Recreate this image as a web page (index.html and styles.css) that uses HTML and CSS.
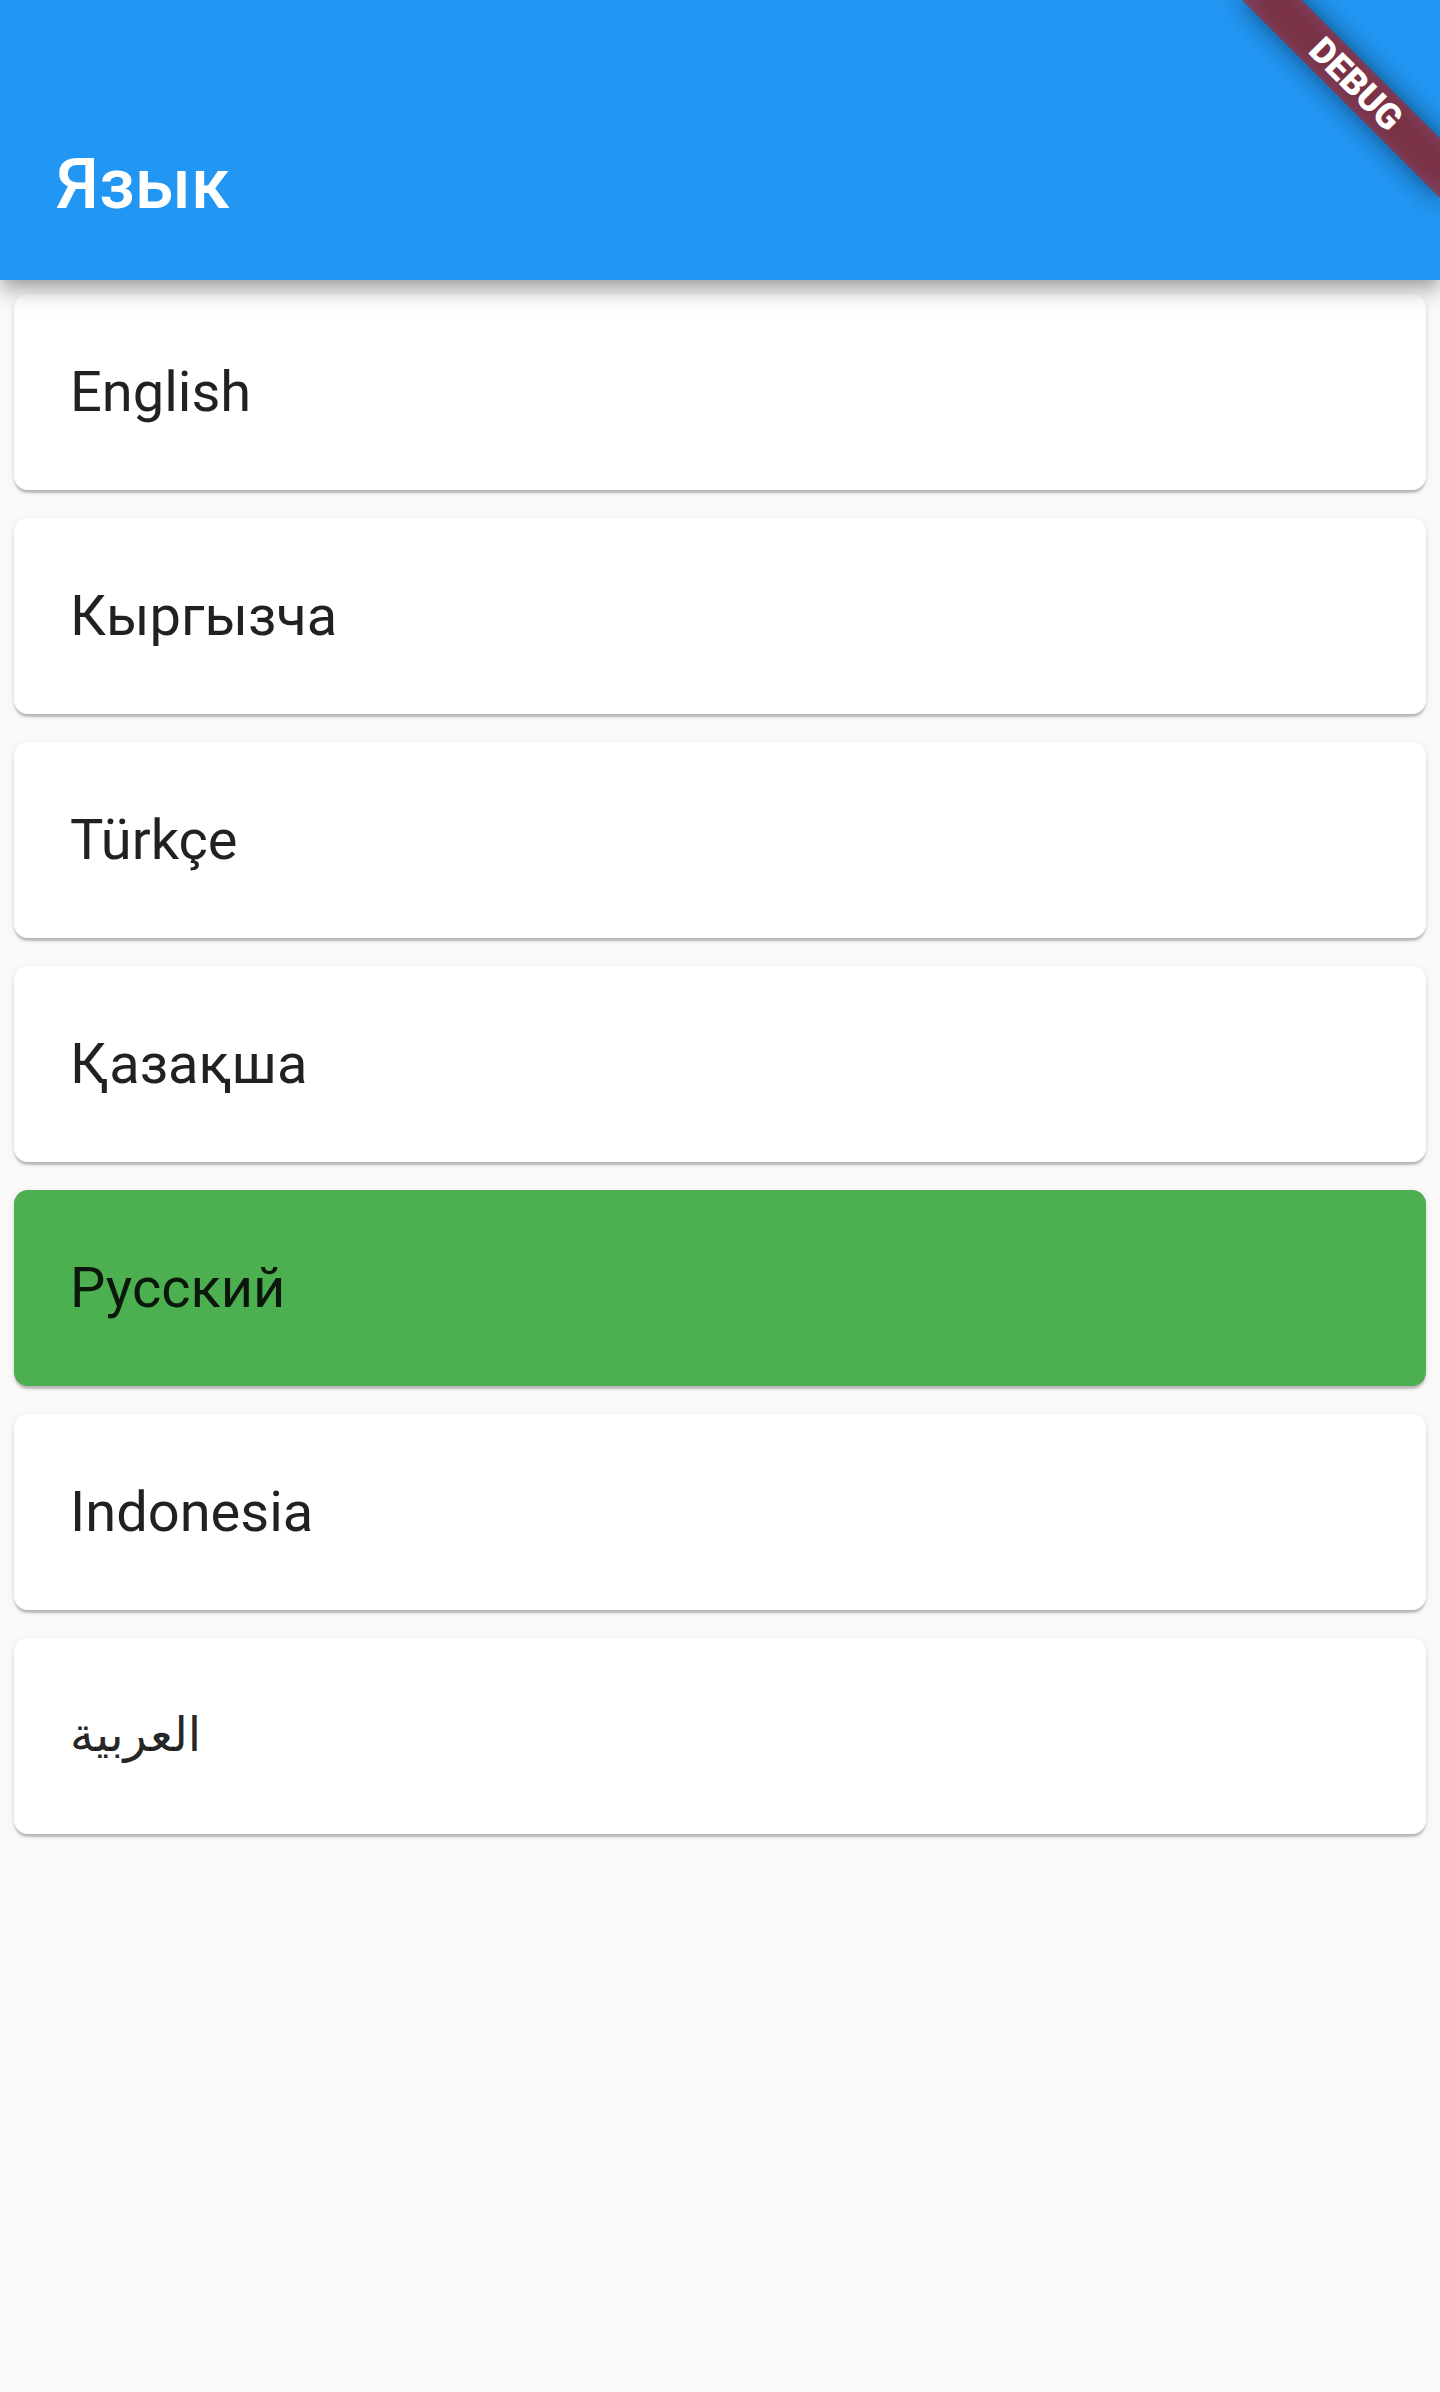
FILE: index.html
```html
<!DOCTYPE html>
<html lang="ru">
<head>
<meta charset="utf-8">
<title>Язык</title>
<link rel="stylesheet" href="styles.css">
</head>
<body>
<div class="screen">
  <header class="appbar">
    <div class="toolbar"><h1 class="title">Язык</h1></div>
  </header>
  <main class="list">
    <div class="card"><span class="label">English</span></div>
    <div class="card"><span class="label">Кыргызча</span></div>
    <div class="card"><span class="label">Türkçe</span></div>
    <div class="card"><span class="label">Қазақша</span></div>
    <div class="card card-selected"><span class="label">Русский</span></div>
    <div class="card"><span class="label">Indonesia</span></div>
    <div class="card"><span class="label label-ar">العربية</span></div>
  </main>
  <div class="banner-clip">
    <div class="banner-shadow"></div>
    <div class="banner"><span class="banner-text">DEBUG</span></div>
  </div>
</div>
</body>
</html>
```
FILE: styles.css
```css
html, body {
  margin: 0;
  padding: 0;
}
body {
  background: #fafafa;
  font-family: Roboto, "Noto Sans", "DejaVu Sans", sans-serif;
  width: 1440px;
  height: 2392px;
  overflow: hidden;
}
.screen {
  position: relative;
  width: 1440px;
  height: 2392px;
  background: #fafafa;
}
.appbar {
  position: relative;
  z-index: 2;
  height: 280px;
  background: #2196f3;
  box-sizing: border-box;
  padding-top: 84px;
  box-shadow: 0 7px 14px -3.5px rgba(0,0,0,0.2), 0 14px 17.5px 0 rgba(0,0,0,0.14), 0 3.5px 35px 0 rgba(0,0,0,0.12);
}
.toolbar {
  height: 196px;
  display: flex;
  align-items: center;
  padding-left: 56px;
  padding-top: 4px;
  box-sizing: border-box;
}
.title {
  margin: 0;
  color: #ffffff;
  font-family: Roboto, "Noto Sans", sans-serif;
  font-size: 70px;
  font-weight: 500;
  line-height: 82px;
}
.list {
  position: relative;
  z-index: 1;
  display: flex;
  flex-direction: column;
  padding: 14px 0;
}
.card {
  margin: 14px 14px;
  height: 196px;
  background: #ffffff;
  border-radius: 14px;
  display: flex;
  align-items: center;
  padding: 0 56px;
  box-shadow: 0 3.5px 2px -1px rgba(0,0,0,0.16), 0 2px 3px 0 rgba(0,0,0,0.1), 0 2px 9px 0 rgba(0,0,0,0.08);
}
.card:first-child { margin-top: 0; }
.card-selected {
  background: #4caf50;
}
.label {
  color: rgba(0,0,0,0.87);
  font-size: 56px;
  font-weight: 400;
  line-height: 66px;
}
.label-ar {
  font-family: "DejaVu Sans", sans-serif;
  font-size: 48px;
  padding-bottom: 4px;
}
.banner-clip {
  position: absolute;
  top: 0;
  right: 0;
  width: 300px;
  height: 300px;
  overflow: hidden;
  z-index: 5;
  pointer-events: none;
}
.banner, .banner-shadow {
  position: absolute;
  left: 160px;
  top: 98px;
  width: 280px;
  height: 42px;
  transform-origin: 140px -98px;
  transform: rotate(45deg);
}
.banner-shadow {
  background: rgba(0,0,0,0.5);
  filter: blur(14px);
}
.banner {
  background: rgba(183,28,28,0.627);
  display: flex;
  align-items: center;
  justify-content: center;
}
.banner-text {
  color: #ffffff;
  font-family: Roboto, "Noto Sans", sans-serif;
  font-size: 35.7px;
  font-weight: 900;
  line-height: 36px;
}
```
